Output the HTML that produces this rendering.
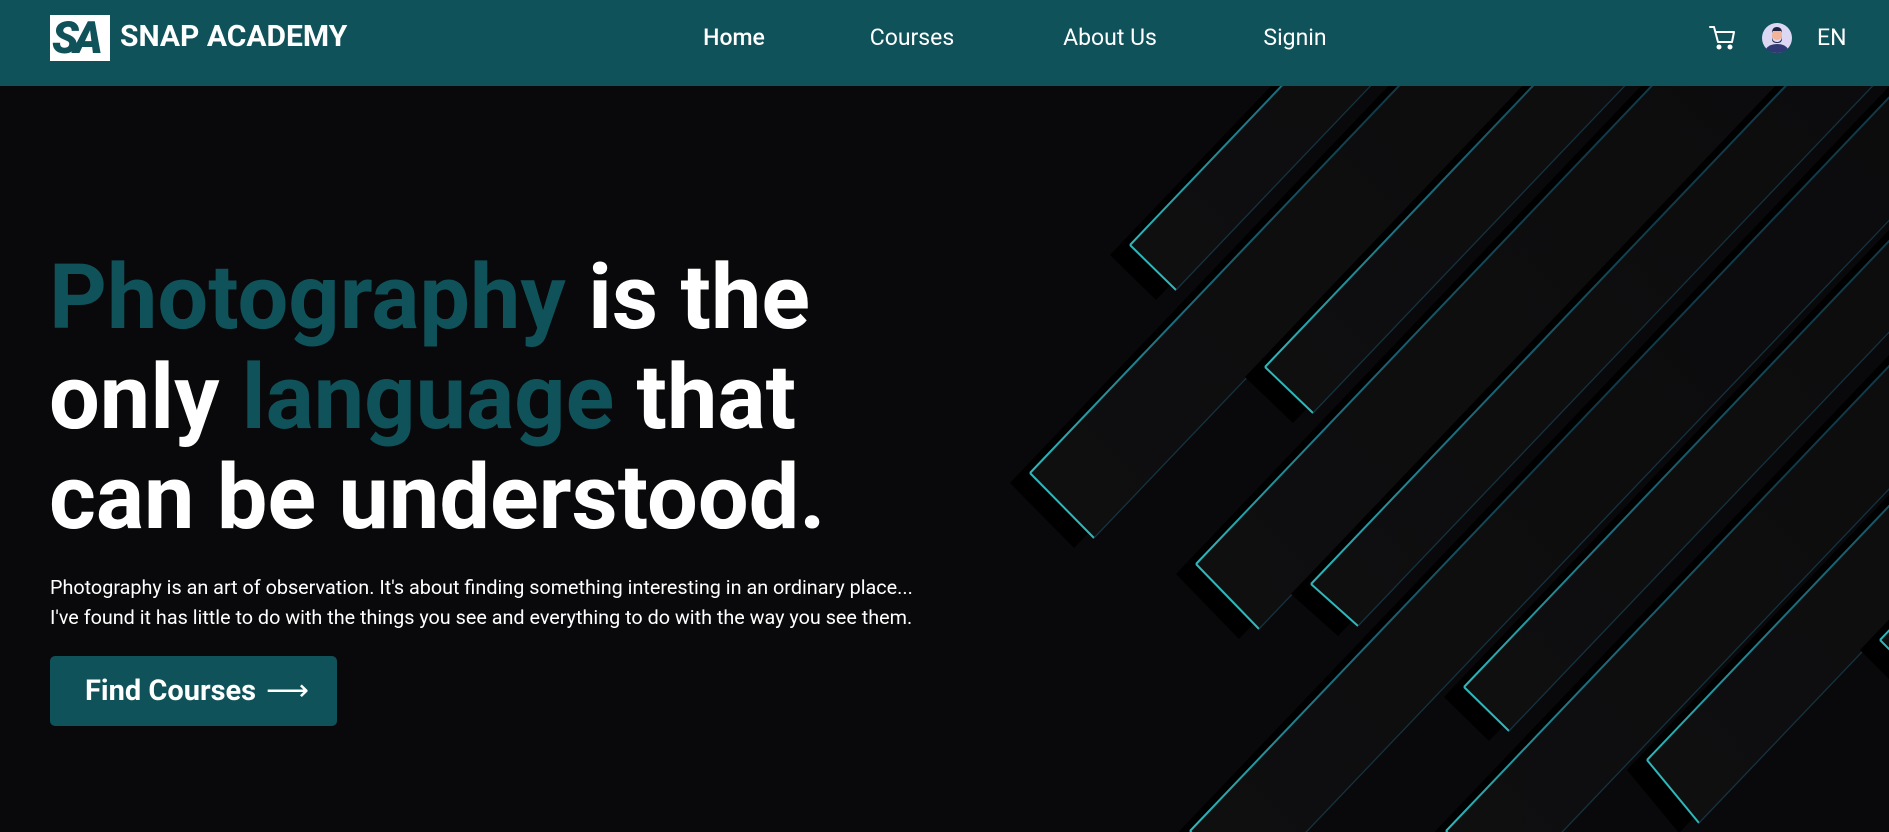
<!DOCTYPE html>
<html><head><meta charset="utf-8"><style>
*{margin:0;padding:0;box-sizing:border-box}
html,body{width:1889px;height:832px;overflow:hidden}
body{background:#09080b;font-family:"Roboto","Liberation Sans",sans-serif;position:relative}
nav{position:absolute;left:0;top:0;width:1889px;height:86px;background:#10525a;z-index:2}
.logo{position:absolute;left:50px;top:15px;width:60px;height:46px;background:#fff;color:#10525a;font-weight:900;font-size:44px;line-height:46px;letter-spacing:-5px;padding-left:2px;overflow:hidden;font-style:italic}
.brand{position:absolute;left:120px;top:19px;color:#fff;font-weight:bold;font-size:30px;line-height:36px}
.nl{position:absolute;top:24px;color:#fff;font-size:23px;line-height:28px;transform:translateX(-50%)}
.en{position:absolute;left:1817px;top:24px;color:#fff;font-size:23px;line-height:28px}
h1{position:absolute;left:49px;top:248px;font-size:90px;line-height:100px;color:#fff;font-weight:bold;z-index:1;white-space:nowrap}
h1 span{color:#10525a}
p{position:absolute;left:50px;top:573px;color:#fff;font-size:19.8px;line-height:30px;z-index:1;white-space:nowrap}
.btn{position:absolute;left:50px;top:656px;width:287px;height:70px;background:#10525a;border-radius:5px;color:#fff;font-weight:bold;font-size:29px;line-height:70px;padding-left:35px;z-index:1}
.btn b{font-weight:normal;font-size:30px;margin-left:10px}
svg.bg{position:absolute;left:0;top:0}
</style></head><body>
<svg class="bg" width="1889" height="832" viewBox="0 0 1889 832">
<defs>
<linearGradient id="g" x1="0" y1="1" x2="1" y2="0"><stop offset="0" stop-color="#0f0f10"/><stop offset="1" stop-color="#0a0a0c"/></linearGradient>
</defs>
<g id="stripes"></g>
</svg>
<nav>
<div class="logo">SA</div>
<div class="brand">SNAP ACADEMY</div>
<div class="nl" style="left:734px;font-weight:500">Home</div>
<div class="nl" style="left:912px">Courses</div>
<div class="nl" style="left:1110px">About Us</div>
<div class="nl" style="left:1295px">Signin</div>
<svg style="position:absolute;left:1708px;top:24px" width="28" height="28" viewBox="0 0 28 28" fill="none" stroke="#fff" stroke-width="2" stroke-linecap="round" stroke-linejoin="round"><path d="M2 3h4l4 15h14l2-10H8"/><circle cx="11" cy="23" r="1.5" fill="#fff"/><circle cx="22" cy="23" r="1.5" fill="#fff"/></svg>
<svg style="position:absolute;left:1762px;top:23px" width="30" height="30" viewBox="0 0 30 30"><circle cx="15" cy="15" r="15" fill="#dcd8f4"/><path d="M4 26q3-5 11-5t11 5q-5 4-11 4t-11-4z" fill="#2f3a74"/><circle cx="15" cy="12" r="5" fill="#f3b39a"/><path d="M10 13q0 6 5 6t5-6v3q0 4-5 4t-5-4z" fill="#1f2340"/><path d="M10 10q0-6 5-6t5 6l-1-2h-8z" fill="#1f2340"/></svg>
<div class="en">EN</div>
</nav>
<h1><span>Photography</span> is the<br>only <span>language</span> that<br>can be understood.</h1>
<p>Photography is an art of observation. It's about finding something interesting in an ordinary place...<br>I've found it has little to do with the things you see and everything to do with the way you see them.</p>
<div class="btn">Find Courses<b>⟶</b></div>
<script>
var C=[[1130,245,46,45],[1030,473,64,65],[1265,367,48,46],[1196,564,63,65],[1311,584,47,42],[1464,687,45,44],[1647,760,52,63],[1190,831,60,60],[1446,831,60,60],[1880,640,50,50]];
var s='',d='',L=1400,ux=0.69,uy=-0.724;
C.forEach(function(c,i){var x=c[0],y=c[1],wx=c[2],wy=c[3];
var p=[[x,y],[x+wx,y+wy],[x+wx+L*ux,y+wy+L*uy],[x+L*ux,y+L*uy]];
d+='<linearGradient id="f'+i+'" gradientUnits="userSpaceOnUse" x1="'+x+'" y1="'+y+'" x2="'+(x+500*ux)+'" y2="'+(y+500*uy)+'"><stop offset="0" stop-color="#2fb8bb"/><stop offset="0.4" stop-color="#1e6f80"/><stop offset="1" stop-color="#123a48"/></linearGradient>';
var sh=p.map(function(q){return (q[0]-20)+','+(q[1]+10)}).join(' ');
s+='<polygon points="'+sh+'" fill="#000"/>';
s+='<polygon points="'+p.map(function(q){return q.join(',')}).join(' ')+'" fill="url(#g)"/>';
s+='<polyline points="'+(x+L*ux)+','+(y+L*uy)+' '+x+','+y+'" fill="none" stroke="url(#f'+i+')" stroke-width="2"/>';
s+='<line x1="'+x+'" y1="'+y+'" x2="'+(x+wx)+'" y2="'+(y+wy)+'" stroke="#2fb8bb" stroke-width="2"/>';
s+='<line x1="'+(x+wx)+'" y1="'+(y+wy)+'" x2="'+(x+wx+L*ux)+'" y2="'+(y+wy+L*uy)+'" stroke="#1b4f63" stroke-width="1.3" stroke-opacity="0.6"/>';
});
document.querySelector('defs').innerHTML+=d;
document.getElementById('stripes').innerHTML=s;
</script>
</body></html>
